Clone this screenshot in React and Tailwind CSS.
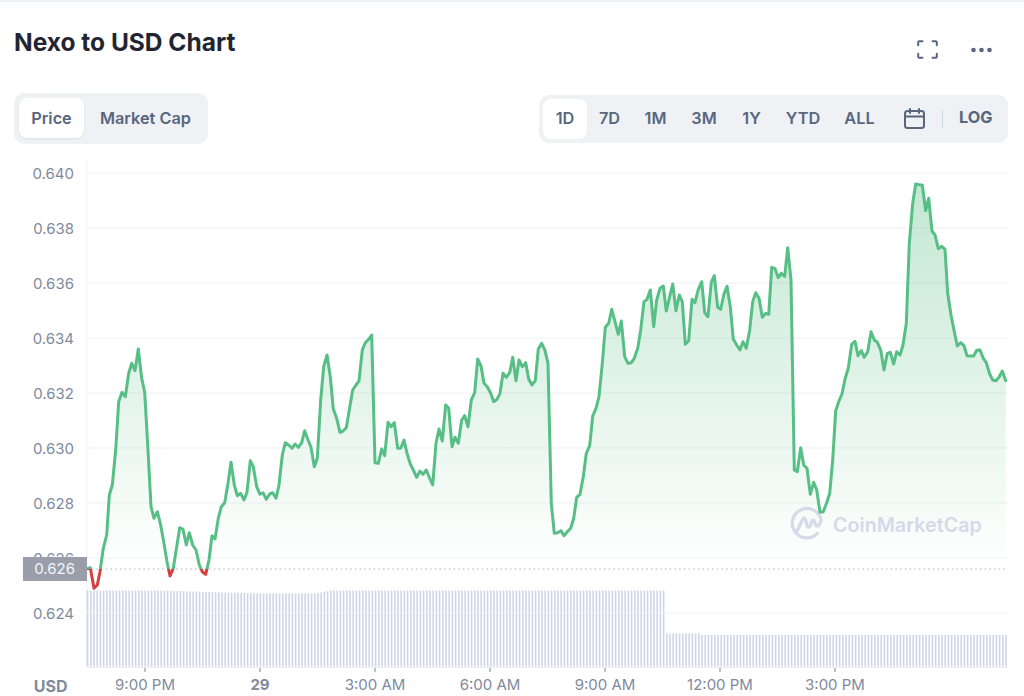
const a=[22,716,31,713,42,775,52,765,60,725,70,655,80,615,88,495,97,465,107,360,116,215,126,187,136,200,146,130,155,100,165,122,175,57,185,145,194,187,204,360,213,530,222,565,232,545,241,580,251,635,261,695,270,738,280,715,290,650,299,593,309,598,319,645,328,608,338,645,348,660,358,705,367,725,377,733,387,690,396,617,405,627,415,565,424,530,434,518,444,460,453,397,463,465,472,497,482,490,492,510,501,487,511,392,520,410,530,470,540,493,549,488,559,508,569,492,578,488,588,505,597,465,607,375,616,338,626,345,636,355,645,342,655,352,665,338,674,302,684,330,693,352,703,410,712,385,722,210,731,110,741,75,751,140,760,237,770,265,780,307,789,303,799,293,808,240,818,180,828,165,837,153,847,60,856,38,866,28,875,15];
const b=[15,548,25,550,35,507,44,527,54,427,63,440,73,428,83,505,92,505,102,480,111,520,121,552,130,570,140,592,150,573,159,583,169,570,179,595,188,615,198,490,207,447,217,483,227,375,236,385,246,500,255,472,265,490,275,420,284,407,294,440,304,360,314,338,323,237,333,258,342,310,352,320,362,340,371,365,381,358,390,340,399,280,409,292,419,278,428,232,438,302,447,240,457,260,467,248,476,297,486,315,496,302,505,207,515,190,525,212,534,250,544,670,553,760,563,758,573,752,582,767,592,755,602,745,611,715,620,652,630,643,640,590,649,520,659,497,668,408,678,385,687,350,697,250,706,142,716,130,725,88,735,125,745,163,754,123,764,230,774,250,784,248,793,235,803,205,812,150,822,65,831,58,841,30,851,140,860,60,870,25,880,18,889,93,899,50,908,12,918,92,928,45];
const c=[7,395,16,523,26,512,36,388,45,398,55,358,65,335,74,428,84,440,94,337,103,317,113,412,122,418,132,372,141,349,151,410,160,508,170,525,180,540,189,515,199,535,209,480,218,395,227,368,237,385,247,442,257,430,266,433,275,292,285,296,295,323,304,310,314,319,323,233,333,330,343,900,352,905,362,833,371,885,381,895,391,973,401,937,410,960,420,1027,430,1025,440,998,449,970,458,870,467,722,476,695,486,672,495,627,505,595,515,523,525,514,534,557,544,542,553,562,563,545,573,485,583,510,592,517,602,540,612,600,622,550,631,547,641,582,650,545,660,555,669,525,679,460,688,220,698,100,707,42,717,44,727,45,737,122,746,85,756,183,765,195,775,236,785,229,795,238,803,370,813,435,823,485,832,528,842,518,852,527,861,557,871,558,881,558,890,541,900,540,910,565,919,578,929,612,938,630,948,632,957,622,967,603,977,632];

function toPts(arr, ox, oy) {
  const out = [];
  for (let i = 0; i < arr.length; i += 2) {
    out.push([+(ox + arr[i] / 3).toFixed(1), +(oy + arr[i + 1] / 3).toFixed(1)]);
  }
  return out;
}
const pts = [...toPts(a, 80, 330), ...toPts(b, 370, 280), ...toPts(c, 680, 170)];
const line = pts.map((p) => p.join(",")).join(" ");
const lastX = pts[pts.length - 1][0];
const area = `${pts[0][0]},569 ${line} ${lastX},569`;

const bars = [];
for (let x = 87.6, i = 0; x < 1007; x += 3.2, i++) {
  let top;
  if (x < 160) top = 590.5;
  else if (x < 260) top = 590.5 + ((x - 160) / 100) * 3;
  else if (x < 316) top = 593.5;
  else if (x < 330) top = 593.5 - ((x - 316) / 14) * 3;
  else if (x < 664.5) top = 590.5;
  else if (x < 700) top = 633.5;
  else top = 635;
  bars.push([+x.toFixed(1), +top.toFixed(1)]);
}

const gridY = [173, 228, 283, 338, 393, 448, 503, 558, 613];
const tickX = [145, 260, 375, 490, 605, 720, 835];
const yLabels = ["0.640", "0.638", "0.636", "0.634", "0.632", "0.630", "0.628", "0.626", "0.624"];
const xLabels = ["9:00 PM", "29", "3:00 AM", "6:00 AM", "9:00 AM", "12:00 PM", "3:00 PM"];
const ranges = [
  ["7D", "w-[45px]"],
  ["1M", "w-[47px]"],
  ["3M", "w-[50px]"],
  ["1Y", "w-[45px]"],
  ["YTD", "w-[58px]"],
  ["ALL", "w-[55px]"],
];

function Chart() {
  return (
    <svg viewBox="86 159 924 516" className="mt-[14px] block h-[516px] w-[924px] shrink-0">
      <defs>
        <linearGradient id="fill" gradientUnits="userSpaceOnUse" x1="0" y1="184" x2="0" y2="569">
          <stop offset="0" stopColor="#59bd83" stopOpacity="0.36" />
          <stop offset="1" stopColor="#59bd83" stopOpacity="0" />
        </linearGradient>
        <clipPath id="up"><rect x="86" y="159" width="924" height="410" /></clipPath>
        <clipPath id="down"><rect x="86" y="569" width="924" height="40" /></clipPath>
      </defs>
      <line x1="86.7" y1="159" x2="86.7" y2="667" stroke="#eaf0f8" strokeWidth="1" />
      {bars.map(([x, top]) => (
        <line key={x} x1={x} y1={top} x2={x} y2="666.5" stroke="#cfd4e7" strokeWidth="1.6" />
      ))}
      {gridY.map((y) => (
        <line key={y} x1="87" y1={y} x2="1008" y2={y} stroke="#f0f2f6" strokeWidth="1.2" />
      ))}
      <line x1="87" y1="667.3" x2="1008" y2="667.3" stroke="#e9edf3" strokeWidth="1.2" />
      {tickX.map((x) => (
        <line key={x} x1={x} y1="668" x2={x} y2="672" stroke="#8f97a8" strokeWidth="1.2" />
      ))}
      <polygon points={area} fill="url(#fill)" clipPath="url(#up)" />
      <line x1="87" y1="569" x2="1008" y2="569" stroke="#a6acb9" strokeWidth="1.2" strokeDasharray="1.4 3.3" />
      <g fill="none" stroke="#d5d9e8" strokeWidth="3.2" strokeLinecap="round" strokeLinejoin="round">
        <path d="M821.3 520 A14.7 14.7 0 1 0 817.5 533.4" />
        <path d="M796.7 531.7 L802.6 519.5 C803.6 517.5 805.2 517.8 805.7 520 L807 525.5 C807.6 527.8 809.3 527.8 810.2 525.5 L811.4 522 C812.2 519.6 814 519.6 814.7 522 L815.4 524.5 C816.4 527 818.8 526.2 819.6 524 L821 520.7" />
      </g>
      <polyline points={line} fill="none" stroke="#57bf85" strokeWidth="3" strokeLinejoin="round" strokeLinecap="round" clipPath="url(#up)" />
      <polyline points={line} fill="none" stroke="#d5403f" strokeWidth="3" strokeLinejoin="round" strokeLinecap="round" clipPath="url(#down)" />
    </svg>
  );
}

export default function App() {
  return (
    <div className="relative h-[696px] w-[1024px] overflow-hidden bg-white font-['Inter',sans-serif]">
      <div className="h-[12px] border-t-2 border-[#eef1f6] bg-gradient-to-b from-[#fafbfc] to-white" />

      <div className="flex h-[81px] items-start justify-between pl-[14px] pr-[32px]">
        <h1 className="mt-[14px] text-[24.5px] font-bold leading-[32px] text-[#222531]">Nexo to USD Chart</h1>
        <div className="mt-[28px] flex items-center gap-[33px]">
          <svg width="21" height="19" viewBox="0 0 21 19" fill="none" stroke="#58667e" strokeWidth="2" strokeLinecap="round" strokeLinejoin="round">
            <path d="M1.2 5.2V2.2a1 1 0 0 1 1-1H5.5" />
            <path d="M15.5 1.2h3.3a1 1 0 0 1 1 1v3" />
            <path d="M1.2 13.8v3a1 1 0 0 0 1 1H5.5" />
            <path d="M15.5 17.8h3.3a1 1 0 0 0 1-1v-3" />
          </svg>
          <svg width="21" height="6" viewBox="0 0 21 6" fill="#58667e">
            <circle cx="2.5" cy="3" r="2.3" />
            <circle cx="10.5" cy="3" r="2.3" />
            <circle cx="18.5" cy="3" r="2.3" />
          </svg>
        </div>
      </div>

      <div className="flex items-center justify-between pl-[14px] pr-[16px]">
        <div className="flex h-[51px] w-[194px] items-center rounded-[10px] bg-[#eff1f5] px-[5px] pb-px text-[16.3px] font-semibold text-[#58667e]">
          <div className="flex h-[40px] w-[65px] items-center justify-center rounded-[8px] bg-white shadow-[0_1px_2px_rgba(88,102,126,0.12)]">Price</div>
          <div className="flex h-[40px] items-center pl-[16px]">Market Cap</div>
        </div>
        <div className="flex h-[48px] w-[469px] items-center rounded-[10px] bg-[#eff1f5] pl-[4px] text-[16.3px] font-semibold text-[#58667e]">
          <div className="flex h-[40px] w-[44px] items-center justify-center rounded-[8px] bg-white">1D</div>
          {ranges.map(([r, w]) => (
            <div key={r} className={`flex h-[40px] items-center justify-center ${w}`}>{r}</div>
          ))}
          <svg className="ml-[17px]" width="21" height="21" viewBox="0 0 21 21" fill="none" stroke="#58667e" strokeWidth="2" strokeLinecap="round" strokeLinejoin="round">
            <rect x="1" y="3" width="19" height="17" rx="2.5" />
            <path d="M1 8.5h19" />
            <path d="M6 1v4" />
            <path d="M15 1v4" />
          </svg>
          <div className="ml-[17px] h-[18px] w-px bg-[#cfd6e4]" />
          <div className="mb-[2px] ml-[16px] font-bold">LOG</div>
        </div>
      </div>

      <div className="relative mt-px flex">
        <div className="w-[86px] shrink-0 pr-[12px] pt-px text-right text-[15px] text-[#808a9d]">
          {yLabels.map((l) => (
            <div key={l} className="h-[55px] leading-[55px]">{l}</div>
          ))}
        </div>
        <Chart />
        <div className="absolute left-[23px] top-[412px] h-[24px] w-[64px] bg-[#9a9eab] pr-[12px] text-right text-[15px] leading-[24px] text-[#f4f5f7]">0.626</div>
        <div className="absolute left-[833px] top-[367px] text-[19.7px] font-semibold leading-[26px] text-[#d5d9e8]">CoinMarketCap</div>
      </div>

      <div className="flex h-[21px] items-center text-[15px] text-[#808a9d]">
        <div className="w-[87.5px] shrink-0 pr-[20px] text-right text-[16px] font-bold">USD</div>
        <div className="grid grid-cols-[repeat(7,115px)] text-center">
          {xLabels.map((l) => (
            <div key={l} className={l === "29" ? "font-bold" : ""}>{l}</div>
          ))}
        </div>
      </div>
    </div>
  );
}
